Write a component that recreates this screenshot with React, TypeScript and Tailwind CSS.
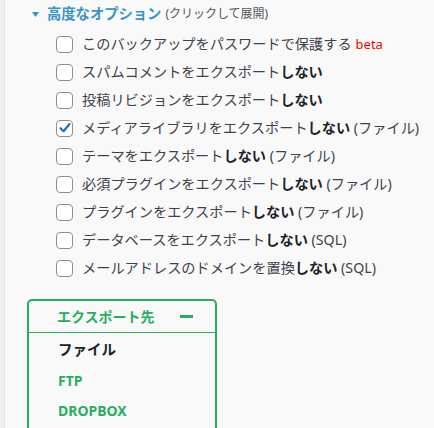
import React from "react";

type Opt = { pre: string; bold?: string; post?: string; beta?: boolean; checked?: boolean };

const options: Opt[] = [
  { pre: "このバックアップをパスワードで保護する", beta: true },
  { pre: "スパムコメントをエクスポート", bold: "しない" },
  { pre: "投稿リビジョンをエクスポート", bold: "しない" },
  { pre: "メディアライブラリをエクスポート", bold: "しない", post: " (ファイル)", checked: true },
  { pre: "テーマをエクスポート", bold: "しない", post: " (ファイル)" },
  { pre: "必須プラグインをエクスポート", bold: "しない", post: " (ファイル)" },
  { pre: "プラグインをエクスポート", bold: "しない", post: " (ファイル)" },
  { pre: "データベースをエクスポート", bold: "しない", post: " (SQL)" },
  { pre: "メールアドレスのドメインを置換", bold: "しない", post: " (SQL)" },
];

const font = { fontFamily: '"Noto Sans", "Noto Sans CJK JP", sans-serif' };

const Checkbox = ({ checked }: { checked?: boolean }) => (
  <span className="w-[17px] h-[17px] shrink-0 rounded-[4px] border border-[#8c8f94] bg-white flex items-center justify-center">
    {checked && (
      <svg width="14" height="14" viewBox="0 0 14 14">
        <path d="M2.5 7.2 L5.6 10.2 L11.5 3" fill="none" stroke="#2271b1" strokeWidth="2.2" strokeLinecap="round" strokeLinejoin="round" />
      </svg>
    )}
  </span>
);

export default function App() {
  return (
    <div className="flex w-[434px] h-[428px] overflow-hidden bg-[#f9f9f9]" style={font}>
      <div className="w-[5px] shrink-0 bg-[#f0f0f0] border-r border-[#e2e2e2]" />
      <div className="flex-1">
        {/* advanced options */}
        <div className="flex items-center h-[28px] pl-[27px]">
          <svg width="7" height="5" viewBox="0 0 7 5" className="mr-[8px]">
            <path d="M0 0 H7 L3.5 5 Z" fill="#3796c4" />
          </svg>
          <span className="text-[14.3px] font-bold text-[#3796c4] leading-none">高度なオプション</span>
          <span className="text-[12px] text-[#50575e] ml-[4px] leading-none">(クリックして展開)</span>
        </div>
        <div className="pl-[51px] pt-[2px]">
          {options.map((o, i) => (
            <div key={i} className="flex items-center h-[28px] gap-[9px]">
              <Checkbox checked={o.checked} />
              <span className="text-[14.2px] text-[#3c434a] whitespace-nowrap leading-none">
                {o.pre}
                {o.bold && <b className="font-bold text-[#1d2327]">{o.bold}</b>}
                {o.post}
                {o.beta && <span className="text-[13px] text-[#ff0000] ml-[4px]">beta</span>}
              </span>
            </div>
          ))}
        </div>

        {/* export target */}
        <div className="ml-[22px] mt-[17px] w-[190px] h-[200px] border-2 border-[#27ae60] rounded-[5px]">
          <div className="flex items-center justify-between h-[32px] pl-[28px] pr-[22px] border-b border-[#27ae60]">
            <span className="text-[14px] font-bold text-[#27ae60] leading-none">エクスポート先</span>
            <span className="w-[13px] h-[3px] bg-[#27ae60]" />
          </div>
          <div className="pt-[2px] pl-[29px]">
            <div className="h-[30px] flex items-center text-[14.5px] font-bold text-[#1d2327]">ファイル</div>
            <div className="h-[30px] flex items-center text-[14px] font-bold text-[#27ae60]">FTP</div>
            <div className="h-[30px] flex items-center text-[14px] font-bold text-[#27ae60]">DROPBOX</div>
          </div>
        </div>
      </div>
    </div>
  );
}
